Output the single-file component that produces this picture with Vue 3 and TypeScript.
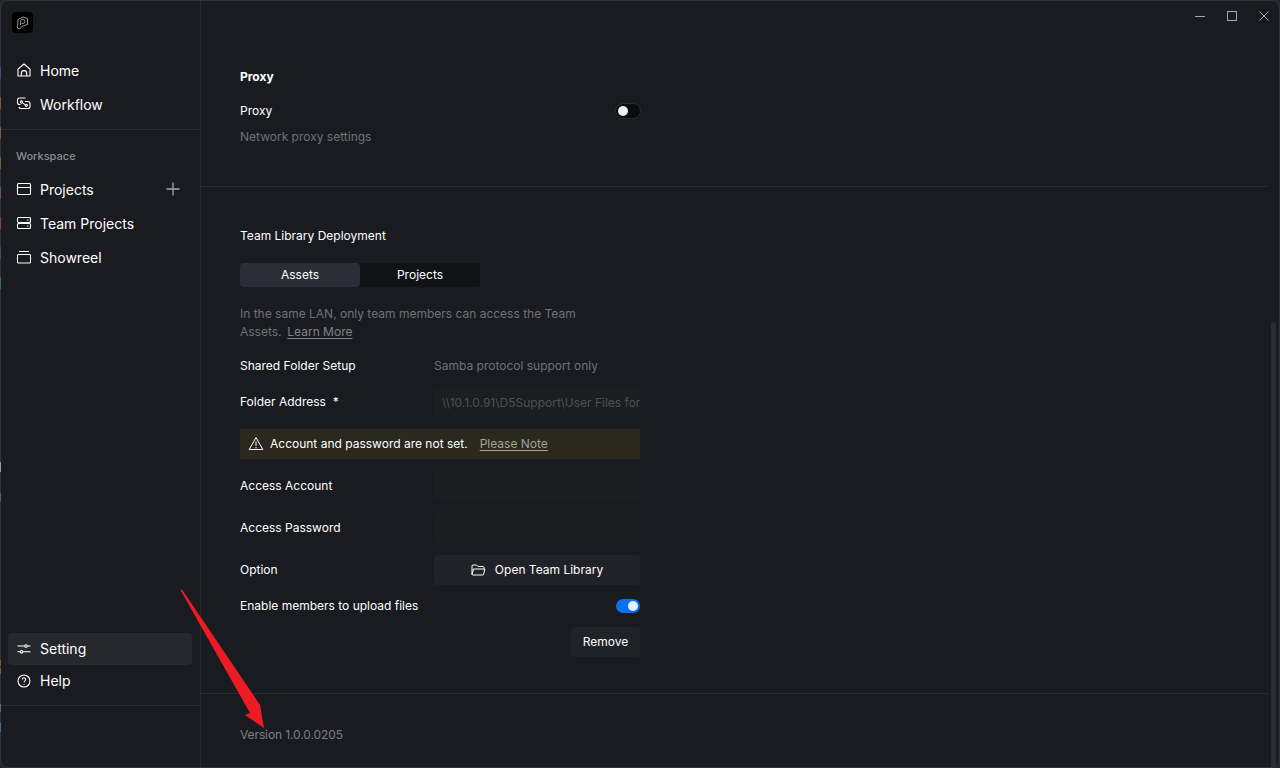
<script setup lang="ts">
const topNav = [
  { label: 'Home', icon: 'home' },
  { label: 'Workflow', icon: 'flow' },
]
const spaceNav = [
  { label: 'Projects', icon: 'projects', plus: true },
  { label: 'Team Projects', icon: 'team', plus: false },
  { label: 'Showreel', icon: 'reel', plus: false },
]
const peeks = [
  { top: 67, height: 12, color: '#3c5a9a' },
  { top: 97, height: 12, color: '#a5682c' },
  { top: 127, height: 12, color: '#a5682c' },
  { top: 157, height: 12, color: '#a5682c' },
  { top: 187, height: 12, color: '#9a4f9a' },
  { top: 217, height: 12, color: '#a5532c' },
  { top: 247, height: 12, color: '#3c5a9a' },
  { top: 277, height: 12, color: '#2f8f4a' },
  { top: 462, height: 10, color: '#c8c8c8' },
  { top: 493, height: 9, color: '#2f7fa8' },
  { top: 660, height: 6, color: '#a5682c' },
  { top: 668, height: 6, color: '#a5682c' },
  { top: 704, height: 8, color: '#4f86b8' },
  { top: 723, height: 9, color: '#4f86b8' },
]
</script>

<template>
  <div class="window">
    <aside class="sidebar">
      <div class="logo-wrap">
        <div class="logo">
          <svg width="13" height="14" viewBox="0 0 13 14" fill="none" stroke="#9a9a9e" stroke-width="1">
            <path d="M2 3.5 7 1l4.5 1.5v6L6.5 10 3.5 13 1.5 12Z" />
            <path d="M4.5 9V5.5A2.2 2.2 0 0 1 9 5.5 2.2 2.2 0 0 1 6.500 7.500H5.500" />
          </svg>
        </div>
      </div>
      <nav class="nav nav-top">
        <div v-for="item in topNav" :key="item.label" class="nav-row">
          <svg class="ic" viewBox="0 0 16 16" fill="none" stroke="#fff" stroke-width="1.1">
            <template v-if="item.icon === 'home'">
              <path d="M2 7.200 8 2l6 5.200V14H2Z" stroke-linejoin="round" />
              <path d="M5.300 14V11.300a2.700 2.700 0 0 1 5.400 0V14" />
            </template>
            <template v-else>
              <path d="M9.500 2H3.500a2 2 0 0 0-2 2v2.500a2 2 0 0 0 2 2h1" />
              <path d="M9 5.500h3a2 2 0 0 1 2 2v3a2 2 0 0 1-2 2H5a2 2 0 0 1-2-1.500" />
              <path d="M6.500 6.600 9 8.600" />
              <circle cx="5.500" cy="6" r="1.100" />
              <circle cx="10.300" cy="9.300" r="1.100" />
            </template>
          </svg>
          <span>{{ item.label }}</span>
        </div>
      </nav>
      <div class="workspace">
        <div class="ws-title">Workspace</div>
        <div v-for="item in spaceNav" :key="item.label" class="nav-row">
          <svg class="ic" viewBox="0 0 16 16" fill="none" stroke="#fff" stroke-width="1.1">
            <template v-if="item.icon === 'projects'">
              <rect x="1.500" y="2.500" width="13" height="11" rx="1" />
              <path d="M1.500 6.500h13" />
            </template>
            <template v-else-if="item.icon === 'team'">
              <rect x="1.500" y="2.500" width="13" height="5" rx="1" />
              <rect x="1.500" y="8.500" width="13" height="5" rx="1" />
              <path d="M11 5h1.500M11 11h1.500" />
            </template>
            <template v-else>
              <rect x="1.500" y="5.500" width="13" height="8.500" rx="1" />
              <path d="M3 2.500h10" />
            </template>
          </svg>
          <span>{{ item.label }}</span>
          <svg v-if="item.plus" class="plus" viewBox="0 0 14 14" stroke="#a8a8ab" stroke-width="1.300">
            <path d="M7 .5v13M.5 7h13" />
          </svg>
        </div>
      </div>
      <div class="nav-bottom">
        <div class="nav-row active">
          <svg class="ic" viewBox="0 0 16 16" fill="none" stroke="#fff" stroke-width="1.100">
            <path d="M1.500 5h7M11.500 5h3M1.500 10.800h2.500M7 10.800h7.500" />
            <circle cx="10" cy="5" r="1.300" />
            <circle cx="5.500" cy="10.800" r="1.300" />
          </svg>
          <span>Setting</span>
        </div>
        <div class="nav-row">
          <svg class="ic" viewBox="0 0 16 16" fill="none" stroke="#fff" stroke-width="1.100">
            <circle cx="8" cy="8" r="6" />
            <path d="M6.300 6.500a1.700 1.700 0 1 1 2.700 1.400c-.6.400-1 .7-1 1.500" />
            <path d="M8 11v.8" />
          </svg>
          <span>Help</span>
        </div>
      </div>
      <div class="sidebar-foot"></div>
    </aside>

    <main class="main">
      <header class="titlebar">
        <svg class="win" viewBox="0 0 12 12" stroke="#a8a8ab" stroke-width="1" fill="none"><path d="M1 6.500h10" /></svg>
        <svg class="win" viewBox="0 0 12 12" stroke="#a8a8ab" stroke-width="1" fill="none"><rect x="1.500" y="1.500" width="9" height="9" /></svg>
        <svg class="win" viewBox="0 0 12 12" stroke="#a8a8ab" stroke-width="1" fill="none"><path d="M1.500 1.500l9 9M10.500 1.500l-9 9" /></svg>
      </header>

      <section class="section proxy">
        <h2 class="heading">Proxy</h2>
        <div class="row between proxy-row">
          <span class="label">Proxy</span>
          <span class="toggle off"><i></i></span>
        </div>
        <p class="muted proxy-desc">Network proxy settings</p>
      </section>

      <section class="section team">
        <h3 class="team-title">Team Library Deployment</h3>
        <div class="tabs">
          <button class="tab on">Assets</button>
          <button class="tab">Projects</button>
        </div>
        <p class="muted lan">In the same LAN, only team members can access the Team Assets.&nbsp; <u>Learn More</u></p>

        <div class="field h-shared">
          <span class="label">Shared Folder Setup</span>
          <span class="muted lift">Samba protocol support only</span>
        </div>
        <div class="field h-addr">
          <span class="label">Folder Address&nbsp; *</span>
          <div class="input addr">\\10.1.0.91\D5Support\User Files for</div>
        </div>
        <div class="warn">
          <svg width="16" height="15" viewBox="0 0 16 15" fill="none" stroke="#fff" stroke-width="1">
            <path d="M8 1.500 1.200 13.500h13.600Z" stroke-linejoin="round" />
            <path d="M8 5.500v4.500M8 11v1.200" />
          </svg>
          <span>Account and password are not set.</span>
          <u>Please Note</u>
        </div>
        <div class="field h-input">
          <span class="label">Access Account</span>
          <div class="input"></div>
        </div>
        <div class="field h-input">
          <span class="label">Access Password</span>
          <div class="input"></div>
        </div>
        <div class="field h-input">
          <span class="label">Option</span>
          <button class="open">
            <svg width="15" height="12" viewBox="0 0 15 12" fill="none" stroke="#fff" stroke-width="1">
              <path d="M1 10.500V2a1 1 0 0 1 1-1h3.500l1.500 1.500h5a1 1 0 0 1 1 1V5" />
              <path d="M1 10.500 2.500 5h11.500l-1.500 5.500a.6.6 0 0 1-.5.5H1.500Z" stroke-linejoin="round" />
            </svg>
            <span class="lift">Open Team Library</span>
          </button>
        </div>
        <div class="row between upload">
          <span class="label">Enable members to upload files</span>
          <span class="toggle on"><i></i></span>
        </div>
        <div class="remove-row"><button class="remove">Remove</button></div>
      </section>

      <section class="version">
        <span>Version 1.0.0.0205</span>
      </section>
    </main>

    <div class="scrollbar"></div>

    <svg class="arrow" width="100" height="150" viewBox="170 585 100 150">
      <path d="M180.500 590 182 589.500 260 705 264 728 245 715 250 713Z" fill="#ed1c24" />
    </svg>
  </div>
  <i v-for="p in peeks" :key="p.top" class="peek" :style="{ top: p.top + 'px', height: p.height + 'px', background: p.color }"></i>
</template>

<style>
html, body { margin: 0; background: #26262a; overflow: hidden; }
</style>

<style scoped>
.window {
  position: relative;
  box-sizing: border-box;
  width: 1280px;
  height: 768px;
  display: flex;
  overflow: hidden;
  background: #1a1b20;
  border: 1px solid #33343a;
  border-radius: 8px;
  color: #fff;
  font-family: Inter, "Liberation Sans", sans-serif;
  font-size: 12px;
}
.peek { position: absolute; left: 0; width: 1px; opacity: .7; }
.sidebar {
  width: 200px;
  flex: none;
  box-sizing: border-box;
  border-right: 1px solid #26272c;
  display: flex;
  flex-direction: column;
}
.logo-wrap { padding: 11px 11px 0; height: 40px; box-sizing: content-box; }
.logo {
  width: 21px;
  height: 21px;
  border-radius: 4px;
  background: #000;
  display: flex;
  align-items: center;
  justify-content: center;
}
.nav-top {
  padding-top: 1px;
  padding-bottom: 8px;
  border-bottom: 1px solid #2b2c31;
}
.nav-row {
  height: 34px;
  display: flex;
  align-items: center;
  padding-left: 15px;
  font-size: 14px;
  font-weight: 400;
  position: relative;
}
.ic { width: 16px; height: 16px; margin-right: 8px; flex: none; }
.plus { position: absolute; left: 165px; top: 10px; width: 14px; height: 14px; }
.ws-title {
  font-size: 11px;
  font-weight: 500;
  color: #8b8c90;
  padding: 19px 0 0 15px;
  height: 23px;
  line-height: 14px;
}
.nav-bottom { margin-top: auto; padding-bottom: 8px; border-bottom: 1px solid #2b2c31; }
.nav-bottom .nav-row { height: 32px; margin: 0 8px 0 7px; padding-left: 8px; border-radius: 4px; }
.nav-bottom .nav-row span { padding-bottom: 2px; }
.nav-bottom .active { background: #27282d; }
.sidebar-foot { height: 61px; flex: none; }

.main { flex: 1; min-width: 0; display: flex; flex-direction: column; padding-right: 11px; }
.titlebar {
  height: 32px;
  display: flex;
  justify-content: flex-end;
  gap: 20px;
  padding: 9px 0 0;
  margin-right: -1px;
  box-sizing: border-box;
}
.win { width: 12px; height: 12px; }
.win:last-child { margin-right: -1px; }
.section { padding-left: 39px; border-bottom: 1px solid #2b2c31; }
.section > * { width: 400px; box-sizing: border-box; }
.proxy { height: 153px; }
.heading { margin: 36px 0 0; font-size: 12px; font-weight: 700; line-height: 16px; }
.row { display: flex; align-items: center; }
.between { justify-content: space-between; }
.proxy-row { height: 24px; margin-top: 14px; }
.label { font-weight: 400; font-size: 12px; padding-bottom: 2px; }
.lift { padding-bottom: 2px; }
.muted { color: #707177; font-weight: 400; font-size: 12px; }
.proxy-desc { margin: 4px 0 0; line-height: 20px; }
.toggle {
  border-radius: 8px;
  box-sizing: border-box;
  display: flex;
  align-items: center;
}
.toggle i { display: block; width: 10px; height: 10px; border-radius: 50%; background: #eee; }
.toggle.off { width: 26px; height: 16px; margin-right: -1px; background: #0b0b0d; border: 1px solid #2a2b30; padding-left: 2px; }
.toggle.on { width: 24px; height: 14px; background: #0c70f0; justify-content: flex-end; padding-right: 2px; }
.toggle.on i { background: #e4eefc; }
.team { height: 506px; }
.team-title { margin: 41px 0 0; font-size: 12px; font-weight: 400; line-height: 16px; }
.tabs { display: flex; width: 240px !important; height: 24px; margin-top: 19px; background: #111216; border-radius: 4px; }
.tab {
  flex: 1;
  border: 0;
  background: transparent;
  color: #fff;
  font: 400 12px Inter, "Liberation Sans", sans-serif;
  border-radius: 4px;
  padding: 0 0 2px;
}
.tab.on { background: #2c2e37; }
.lan { margin: 18px 0 0; line-height: 18px; padding-right: 20px; }
u { text-underline-offset: 2px; }
.lan u { color: #808186; margin-left: -1px; }
.field { display: flex; align-items: center; }
.field > .label { width: 194px; flex: none; }
.h-shared { height: 18px; margin-top: 16px; }
.h-addr { height: 30px; margin-top: 12px; }
.input { flex: 1; height: 30px; background: #1c1d21; border-radius: 2px; overflow: hidden; }
.addr { color: #4f5056; padding-left: 8px; line-height: 31px; white-space: nowrap; }
.warn {
  height: 30px;
  margin-top: 12px;
  background: #29291e;
  display: flex;
  align-items: center;
  padding-left: 8px;
  padding-bottom: 1px;
  box-sizing: border-box;
}
.warn span { margin-left: 6px; }
.warn u { margin-left: 12px; color: #a3a39a; }
.h-input { height: 30px; margin-top: 12px; }
.open {
  flex: 1;
  height: 30px;
  border: 0;
  border-radius: 3px;
  background: #212227;
  color: #fff;
  font: 400 12px Inter, "Liberation Sans", sans-serif;
  display: flex;
  align-items: center;
  justify-content: center;
  gap: 9px;
  padding: 0;
}
.upload { height: 24px; margin-top: 9px; }
.remove-row { display: flex; justify-content: flex-end; margin-top: 9px; }
.remove {
  width: 69px;
  height: 30px;
  border: 0;
  border-radius: 3px;
  background: #212227;
  color: #fff;
  font: 400 12px Inter, "Liberation Sans", sans-serif;
  padding: 0 0 2px;
}
.version { padding: 33px 0 0 39px; color: #7c7e84; font-weight: 400; font-size: 12px; line-height: 16px; letter-spacing: -0.1px; }
.scrollbar {
  position: absolute;
  right: 3px;
  top: 321px;
  bottom: -4px;
  width: 5px;
  border-radius: 3px 3px 0 0;
  background: #2c2d33;
}
.arrow { position: absolute; left: 169px; top: 584px; pointer-events: none; }
</style>
